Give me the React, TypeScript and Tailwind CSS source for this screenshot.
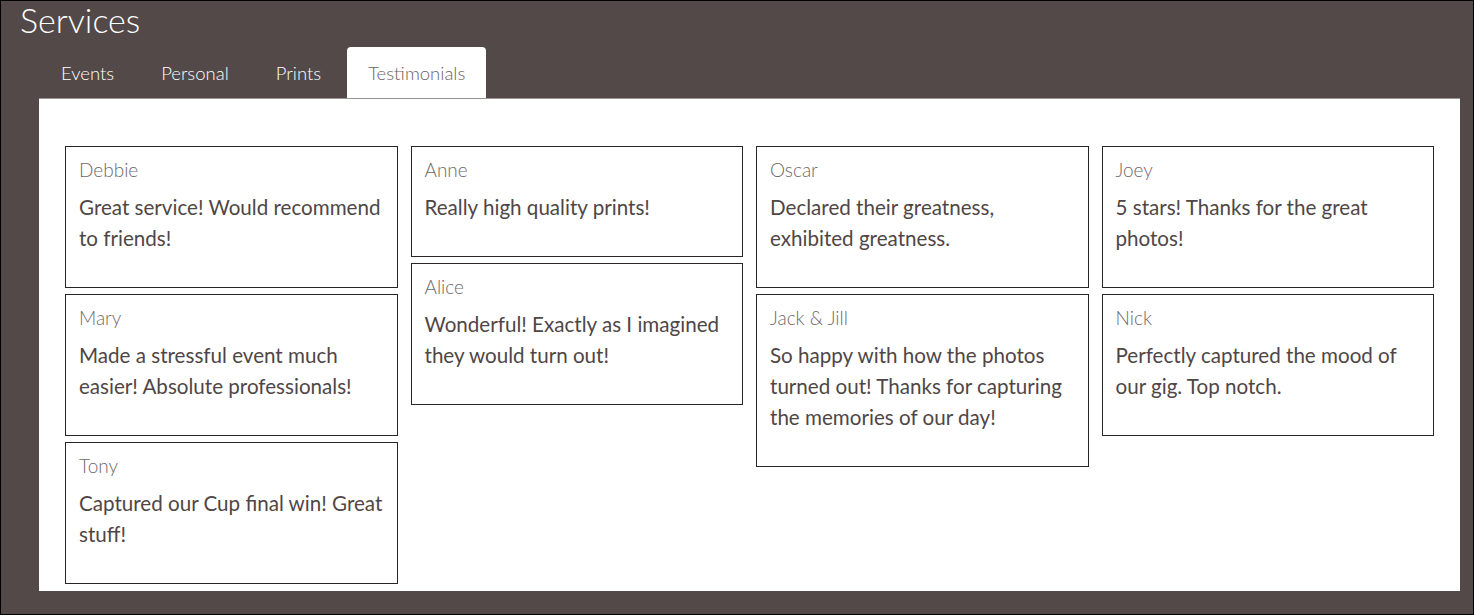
import React from "react";

type T = { name: string; text: string };

const columns: T[][] = [
  [
    { name: "Debbie", text: "Great service! Would recommend to friends!" },
    { name: "Mary", text: "Made a stressful event much easier! Absolute professionals!" },
    { name: "Tony", text: "Captured our Cup final win! Great stuff!" },
  ],
  [
    { name: "Anne", text: "Really high quality prints!" },
    { name: "Alice", text: "Wonderful! Exactly as I imagined they would turn out!" },
  ],
  [
    { name: "Oscar", text: "Declared their greatness, exhibited greatness." },
    { name: "Jack & Jill", text: "So happy with how the photos turned out! Thanks for capturing the memories of our day!" },
  ],
  [
    { name: "Joey", text: "5 stars! Thanks for the great photos!" },
    { name: "Nick", text: "Perfectly captured the mood of our gig. Top notch." },
  ],
];

function Card({ t }: { t: T }) {
  return (
    <div className="border border-[#2a2626] bg-white pl-[13px] pr-[8px] pt-[9px] pb-[33px]">
      <div className="font-['Lato',sans-serif] font-light text-[19px] leading-[28px] text-[#6f6868]">{t.name}</div>
      <p className="mt-[8px] font-['Lato',sans-serif] text-[20.6px] leading-[31px] text-[#4f4646]">{t.text}</p>
    </div>
  );
}

export default function App() {
  const tabs = ["Events", "Personal", "Prints", "Testimonials"];
  return (
    <div className="w-[1474px] h-[615px] border border-black bg-[#524948] flex flex-col overflow-hidden font-['Lato',sans-serif]">
      <div className="h-[46px] pl-[19px]">
        <h1 className="font-light text-[34px] leading-[38px] text-white">Services</h1>
      </div>
      <div className="flex gap-[5px] pl-[39px] h-[52px]">
        {tabs.map((tab) => (
          <div
            key={tab}
            className={
              tab === "Testimonials"
                ? "px-[21px] h-[52px] leading-[52px] bg-white rounded-t-[4px] text-[18.5px] font-light text-[#6a6262]"
                : "px-[21px] h-[52px] leading-[52px] text-[18.5px] font-light text-white"
            }
          >
            {tab}
          </div>
        ))}
      </div>
      <div className="flex-1 ml-[38px] mr-[13px] mb-[23px] bg-white pt-[47px] px-[26px] shadow-[0_-1px_0_#9a9494]">
        <div className="grid grid-cols-4 gap-x-[13px] items-start">
          {columns.map((col, i) => (
            <div key={i} className="flex flex-col gap-[6px]">
              {col.map((t) => (
                <Card key={t.name} t={t} />
              ))}
            </div>
          ))}
        </div>
      </div>
    </div>
  );
}
